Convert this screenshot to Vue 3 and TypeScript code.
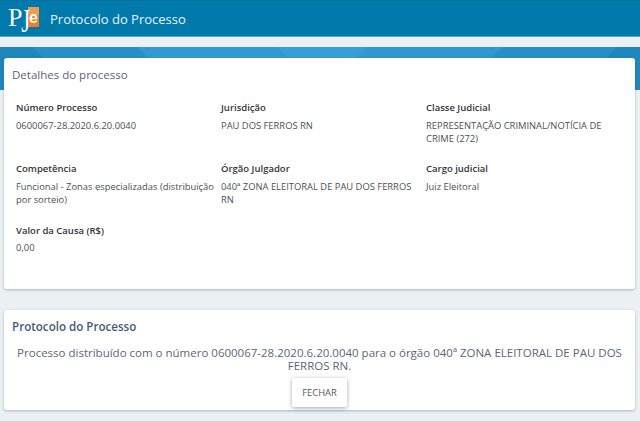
<script setup lang="ts">
interface Field { label: string; value: string }
const fields: Field[] = [
  { label: 'Número Processo', value: '0600067-28.2020.6.20.0040' },
  { label: 'Jurisdição', value: 'PAU DOS FERROS RN' },
  { label: 'Classe Judicial', value: 'REPRESENTAÇÃO CRIMINAL/NOTÍCIA DE CRIME (272)' },
  { label: 'Competência', value: 'Funcional - Zonas especializadas (distribuição por sorteio)' },
  { label: 'Órgão Julgador', value: '040ª ZONA ELEITORAL DE PAU DOS FERROS RN' },
  { label: 'Cargo judicial', value: 'Juiz Eleitoral' },
  { label: 'Valor da Causa (R$)', value: '0,00' },
]
</script>

<template>
  <div class="page">
    <header class="topbar">
      <div class="logo">
        <span class="logo-p">P</span><span class="logo-j">J</span><span class="logo-e">e</span>
      </div>
      <h1 class="app-title">Protocolo do Processo</h1>
    </header>
    <main class="content">
      <section class="card details">
        <h2 class="details-title">Detalhes do processo</h2>
        <div class="grid">
          <div v-for="f in fields" :key="f.label" class="field">
            <div class="label">{{ f.label }}</div>
            <div class="value">{{ f.value }}</div>
          </div>
        </div>
      </section>
      <section class="card protocol">
        <h2 class="protocol-title">Protocolo do Processo</h2>
        <p class="message">Processo distribuído com o número 0600067-28.2020.6.20.0040 para o órgão 040ª ZONA ELEITORAL DE PAU DOS FERROS RN.</p>
        <div class="actions"><button class="close" type="button">FECHAR</button></div>
      </section>
    </main>
  </div>
</template>

<style>
html, body { margin: 0; background: #ebf0f3; }
</style>

<style scoped>
.page {
  width: 640px;
  height: 421px;
  overflow: hidden;
  font-family: "Open Sans", "Noto Sans", sans-serif;
  background: #ebf0f3;
}
.topbar {
  height: 37px;
  box-sizing: border-box;
  background: #0079ab;
  border-top: 1px solid #0a6f9c;
  border-bottom: 1px solid #5ba7bb;
  display: flex;
  align-items: center;
  padding-left: 8px;
}
.logo {
  width: 32px;
  height: 30px;
  display: flex;
  align-items: flex-start;
  margin-right: 10px;
  margin-top: 1px;
}
.logo-p {
  font-family: "Liberation Serif", serif;
  font-size: 26px;
  line-height: 26px;
  color: #f2f7fa;
  width: 13px;
  margin-top: 1px;
}
.logo-j {
  font-family: "Liberation Serif", serif;
  font-size: 26px;
  line-height: 26px;
  color: #f2f7fa;
  width: 7px;
  margin-top: 1px;
  transform: scale(0.9, 1.3);
  transform-origin: 50% 10%;
}
.logo-e {
  width: 11px;
  height: 20px;
  margin-top: 3px;
  display: flex;
  align-items: flex-end;
  justify-content: center;
  background: linear-gradient(#f09a52 0 40%, #ee7d2d 40%);
  color: #fff;
  font-family: "Liberation Sans", sans-serif;
  font-weight: 700;
  font-size: 16px;
  line-height: 18px;
}
.app-title {
  margin: 0;
  font-size: 13px;
  font-weight: 400;
  color: #e8f3f8;
}
.content {
  margin-top: 10px;
  padding: 11px 5px 0 4px;
  background:
    linear-gradient(45deg, #1e88bd 0 53px, #2690c8 54px 127px, #309bd3 128px 226px, transparent 227px) 0 0 / 100% 43px no-repeat,
    linear-gradient(135deg, transparent 0 259px, #2e98d1 260px 355px, #2690c8 356px 436px, #1e88bd 437px) 0 0 / 100% 43px no-repeat,
    linear-gradient(#35a0d8, #35a0d8) 0 0 / 100% 43px no-repeat;
}
.card {
  background: #fff;
  border-radius: 3px;
  box-shadow: 0 1px 3px rgba(60, 70, 80, 0.35);
  box-sizing: border-box;
}
.details {
  height: 231px;
  padding: 9px 0 0 8px;
}
.details-title {
  margin: 0 0 18px;
  font-size: 11.5px;
  line-height: 16px;
  font-weight: 400;
  color: #5a6478;
}
.grid {
  display: grid;
  grid-template-columns: repeat(3, 205px);
  padding-left: 4px;
}
.field {
  height: 61.4px;
  padding-right: 7px;
  box-sizing: border-box;
}
.label {
  font-size: 9.5px;
  line-height: 14px;
  font-weight: 600;
  color: #33343a;
  margin-bottom: 3.6px;
}
.value {
  font-size: 9.4px;
  line-height: 13px;
  color: #4a4f55;
}
.protocol {
  margin-top: 21px;
  height: 100px;
  padding: 9px 8px 0;
}
.protocol-title {
  margin: 0;
  font-size: 11.6px;
  line-height: 16px;
  font-weight: 600;
  color: #4a5a74;
}
.message {
  margin: 11px 0 0;
  font-size: 11.5px;
  line-height: 13px;
  text-align: center;
  color: #5c6678;
}
.actions {
  display: flex;
  justify-content: center;
  margin-top: 6px;
}
.close {
  width: 55px;
  height: 29px;
  border: 0;
  border-radius: 2px;
  background: #fff;
  box-shadow: 0 1px 4px rgba(0, 0, 0, 0.35);
  font: 400 9.4px "Open Sans", sans-serif;
  color: #555;
  padding: 0;
}
</style>
